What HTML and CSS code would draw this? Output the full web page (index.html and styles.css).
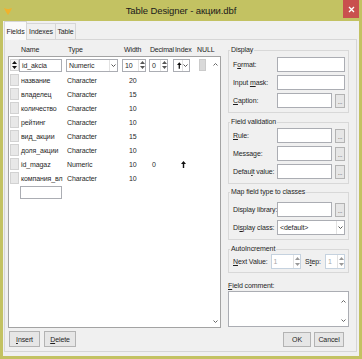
FILE: index.html
```html
<!DOCTYPE html>
<html lang="ru">

<head>
    <meta charset="UTF-8">
    <title>Table Designer - акции.dbf</title>
    <link rel="stylesheet" href="styles.css">
</head>

<body>

    <div class="window">
        <div class="titlebar">
            <svg class="app-icon" width="8" height="8" viewBox="0 0 8 8">
                <path d="M0 1 L3 2 L5 2 L8 1 L6 5 L4 8 L2 5 Z" fill="#f1b22c"/>
            </svg>
            <div class="title">Table Designer - акции.dbf</div>
            <div class="close">
                <svg width="7" height="7" viewBox="0 0 7 7"><path d="M1 1 L6 6 M6 1 L1 6" stroke="#fff" stroke-width="1.3"/></svg>
            </div>
        </div>

        <div class="client">
            <div class="tabs">
                <div class="tab active t-fields">Fields</div>
                <div class="tab t-indexes">Indexes</div>
                <div class="tab t-table">Table</div>
            </div>

            <div class="page">
                <!-- fields grid -->
                <div class="left">
                    <div class="grid-head">
                        <span></span>
                        <span>Name</span>
                        <span>Type</span>
                        <span>Width</span>
                        <span class="h-dec">Decimal</span>
                        <span>Index</span>
                        <span class="h-null">NULL</span>
                    </div>

                    <div class="grid">
                        <div class="rows">
                            <div class="row first">
                                <div class="sel">
                                    <svg width="5" height="8" viewBox="0 0 5 8"><path d="M2.5 0 L5 3 L0 3 Z M2.5 8 L5 5 L0 5 Z" fill="#111"/></svg>
                                </div>
                                <div class="c-name"><div class="edit name-edit">id_akcia</div></div>
                                <div class="c-type">
                                    <div class="edit combo type-combo">
                                        <span>Numeric</span>
                                        <span class="drop"><svg width="5" height="3" viewBox="0 0 5 3"><path d="M0.5 0.5 L2.5 2.5 L4.5 0.5" fill="none" stroke="#555"/></svg></span>
                                    </div>
                                </div>
                                <div class="c-width">
                                    <div class="edit spin w-spin">
                                        <span>10</span>
                                        <span class="arrows">
                                            <svg width="5" height="3" viewBox="0 0 5 3"><path d="M0 3 L2.5 0 L5 3 Z" fill="#555"/></svg>
                                            <svg width="5" height="3" viewBox="0 0 5 3"><path d="M0 0 L5 0 L2.5 3 Z" fill="#555"/></svg>
                                        </span>
                                    </div>
                                </div>
                                <div class="c-dec">
                                    <div class="edit spin d-spin">
                                        <span>0</span>
                                        <span class="arrows">
                                            <svg width="5" height="3" viewBox="0 0 5 3"><path d="M0 3 L2.5 0 L5 3 Z" fill="#555"/></svg>
                                            <svg width="5" height="3" viewBox="0 0 5 3"><path d="M0 0 L5 0 L2.5 3 Z" fill="#555"/></svg>
                                        </span>
                                    </div>
                                </div>
                                <div class="c-index">
                                    <div class="edit combo idx-combo">
                                        <svg class="up-arrow" width="5" height="7" viewBox="0 0 5 7"><path d="M2.5 0 L5 3 L3.2 3 L3.2 7 L1.8 7 L1.8 3 L0 3 Z" fill="#111"/></svg>
                                        <span class="drop"><svg width="5" height="3" viewBox="0 0 5 3"><path d="M0.5 0.5 L2.5 2.5 L4.5 0.5" fill="none" stroke="#555"/></svg></span>
                                    </div>
                                </div>
                                <div class="c-null"><div class="null-box"></div></div>
                            </div>

                            <div class="row"><div class="sel"></div><div class="c-name">название</div><div class="c-type">Character</div><div class="c-width">20</div><div></div><div></div><div></div></div>
                            <div class="row"><div class="sel"></div><div class="c-name">владелец</div><div class="c-type">Character</div><div class="c-width">15</div><div></div><div></div><div></div></div>
                            <div class="row"><div class="sel"></div><div class="c-name">количество</div><div class="c-type">Character</div><div class="c-width">10</div><div></div><div></div><div></div></div>
                            <div class="row"><div class="sel"></div><div class="c-name">рейтинг</div><div class="c-type">Character</div><div class="c-width">10</div><div></div><div></div><div></div></div>
                            <div class="row"><div class="sel"></div><div class="c-name">вид_акции</div><div class="c-type">Character</div><div class="c-width">15</div><div></div><div></div><div></div></div>
                            <div class="row"><div class="sel"></div><div class="c-name">доля_акции</div><div class="c-type">Character</div><div class="c-width">10</div><div></div><div></div><div></div></div>
                            <div class="row">
                                <div class="sel"></div><div class="c-name">id_magaz</div><div class="c-type">Numeric</div><div class="c-width">10</div><div class="c-dec">0</div>
                                <div class="c-index"><svg class="up-arrow" width="5" height="7" viewBox="0 0 5 7"><path d="M2.5 0 L5 3 L3.2 3 L3.2 7 L1.8 7 L1.8 3 L0 3 Z" fill="#111"/></svg></div>
                                <div></div>
                            </div>
                            <div class="row"><div class="sel"></div><div class="c-name">компания_вл</div><div class="c-type">Character</div><div class="c-width">10</div><div></div><div></div><div></div></div>
                            <div class="row new-row"><div></div><div class="c-name"><div class="edit new-edit"></div></div></div>
                        </div>

                        <div class="vscroll">
                            <svg width="5" height="3" viewBox="0 0 5 3"><path d="M0.5 2.5 L2.5 0.5 L4.5 2.5" fill="none" stroke="#666"/></svg>
                            <svg width="5" height="3" viewBox="0 0 5 3"><path d="M0.5 0.5 L2.5 2.5 L4.5 0.5" fill="none" stroke="#666"/></svg>
                        </div>
                    </div>

                    <div class="left-buttons">
                        <button class="btn b-insert"><u>I</u>nsert</button>
                        <button class="btn b-delete"><u>D</u>elete</button>
                    </div>
                </div>

                <!-- field properties -->
                <div class="right">
                    <fieldset class="group g-display">
                        <legend>Display</legend>
                        <div class="frow"><span>F<u>o</u>rmat:</span><div class="edit wide"></div></div>
                        <div class="frow"><span>Input <u>m</u>ask:</span><div class="edit wide"></div></div>
                        <div class="frow"><span><u>C</u>aption:</span><div class="edit"></div><div class="dots">...</div></div>
                    </fieldset>

                    <fieldset class="group g-valid">
                        <legend>Field validation</legend>
                        <div class="frow"><span><u>R</u>ule:</span><div class="edit"></div><div class="dots">...</div></div>
                        <div class="frow"><span>Message:</span><div class="edit"></div><div class="dots">...</div></div>
                        <div class="frow"><span>Defau<u>l</u>t value:</span><div class="edit"></div><div class="dots">...</div></div>
                    </fieldset>

                    <fieldset class="group g-map">
                        <legend>Map field type to classes</legend>
                        <div class="frow"><span>Display library:</span><div class="edit"></div><div class="dots">...</div></div>
                        <div class="frow">
                            <span>Di<u>s</u>play class:</span>
                            <div class="edit combo wide">
                                <span>&lt;default&gt;</span>
                                <span class="drop"><svg width="5" height="3" viewBox="0 0 5 3"><path d="M0.5 0.5 L2.5 2.5 L4.5 0.5" fill="none" stroke="#555"/></svg></span>
                            </div>
                        </div>
                    </fieldset>

                    <fieldset class="group g-auto">
                        <legend>AutoIncrement</legend>
                        <div class="auto-row">
                            <span><u>N</u>ext Value:</span>
                            <div class="edit spin off next-spin">
                                <span>1</span>
                                <span class="arrows">
                                    <svg width="5" height="3" viewBox="0 0 5 3"><path d="M0 3 L2.5 0 L5 3 Z" fill="#999"/></svg>
                                    <svg width="5" height="3" viewBox="0 0 5 3"><path d="M0 0 L5 0 L2.5 3 Z" fill="#999"/></svg>
                                </span>
                            </div>
                            <span class="step-label">S<u>t</u>ep:</span>
                            <div class="edit spin off step-spin">
                                <span>1</span>
                                <span class="arrows">
                                    <svg width="5" height="3" viewBox="0 0 5 3"><path d="M0 3 L2.5 0 L5 3 Z" fill="#999"/></svg>
                                    <svg width="5" height="3" viewBox="0 0 5 3"><path d="M0 0 L5 0 L2.5 3 Z" fill="#999"/></svg>
                                </span>
                            </div>
                        </div>
                    </fieldset>

                    <div class="comment-label"><u>F</u>ield comment:</div>
                    <div class="comment">
                        <div class="vscroll">
                            <svg width="5" height="3" viewBox="0 0 5 3"><path d="M0.5 2.5 L2.5 0.5 L4.5 2.5" fill="none" stroke="#666"/></svg>
                            <svg width="5" height="3" viewBox="0 0 5 3"><path d="M0.5 0.5 L2.5 2.5 L4.5 0.5" fill="none" stroke="#666"/></svg>
                        </div>
                    </div>

                    <div class="right-buttons">
                        <button class="btn b-ok">OK</button>
                        <button class="btn b-cancel">Cancel</button>
                    </div>
                </div>
            </div>
        </div>
    </div>

</body>

</html>
```

FILE: styles.css
```css
* {
    box-sizing: border-box;
}

body {
    margin: 0;
    font-family: "Liberation Sans", Arial, sans-serif;
    font-size: 7px;
    letter-spacing: -0.1px;
    color: #1f1f1f;
    background: #fff;
}

.window {
    width: 362px;
    height: 359px;
    display: flex;
    flex-direction: column;
    background: #c3c262;
    padding: 0 3px 4px 3px;
}

/* title bar */
.titlebar {
    height: 21px;
    flex: none;
    display: grid;
    grid-template-columns: 22px 1fr 22px;
    align-items: center;
}

.app-icon {
    margin-left: 1px;
}

.title {
    text-align: center;
    font-size: 9.5px;
    letter-spacing: -0.1px;
    color: #1a1a1a;
}

.close {
    justify-self: end;
    align-self: start;
    width: 16px;
    height: 18px;
    background: #c9504e;
    display: flex;
    align-items: center;
    justify-content: center;
}

/* dialog body */
.client {
    flex: 1;
    background: #f0f0f0;
    padding: 2px 2px 4px 1px;
    display: flex;
    flex-direction: column;
}

.tabs {
    display: flex;
    height: 16px;
    flex: none;
}

.tab {
    border: 1px solid #d6d6d6;
    border-bottom: none;
    line-height: 15px;
    text-align: center;
    background: #f0f0f0;
    margin-right: -1px;
}

.tab.active {
    background: #fafafa;
    height: 19px;
    margin-top: -2px;
    line-height: 19px;
    position: relative;
    z-index: 1;
}

.t-fields { width: 23px; }
.t-indexes { width: 30px; }
.t-table { width: 21px; }

.page {
    flex: 1;
    border: 1px solid #d6d6d6;
    background: #f0f0f0;
    padding: 4px 7px 4px 3px;
    display: flex;
    gap: 7px;
}

/* fields grid */
.left {
    width: 213px;
    display: flex;
    flex-direction: column;
}

.grid-head,
.row {
    display: grid;
    grid-template-columns: 11px 47px 56px 27px 24px 24px 1fr;
}

.grid-head {
    height: 12px;
    line-height: 12px;
    flex: none;
    white-space: nowrap;
}

.grid-head span {
    padding-left: 2px;
}

.grid-head .h-dec {
    padding-left: 1px;
    letter-spacing: -0.2px;
}

.grid-head .h-null {
    margin-left: -2px;
}

.grid {
    flex: 1;
    border: 1px solid #a3a3a3;
    background: #fff;
    display: flex;
}

.rows {
    flex: 1;
}

.row {
    grid-template-columns: 10px 47px 56px 27px 24px 24px 1fr;
    height: 14px;
    align-items: center;
}

.row.first {
    height: 16px;
}

.sel {
    width: 9px;
    height: 12px;
    margin-left: 1px;
    background: #e8e8e8;
    border: 1px solid #d2d2d2;
    display: flex;
    align-items: center;
    justify-content: center;
}

.row.first .sel {
    background: #f4f4f4;
}

.c-name {
    padding-left: 2px;
    line-height: 11px;
    white-space: nowrap;
    overflow: hidden;
}

.c-type {
    padding-left: 1px;
}

.c-width {
    padding-left: 7px;
}

.c-dec {
    padding-left: 3px;
}

.c-index {
    padding-left: 8px;
    display: flex;
}

.row.first .c-name,
.row.first .c-type,
.row.first .c-width,
.row.first .c-dec,
.row.first .c-index,
.new-row .c-name {
    padding-left: 0;
}

.edit {
    height: 13px;
    border: 1px solid #abadb3;
    background: #fff;
    display: flex;
    align-items: center;
    padding-left: 2px;
}

.name-edit { width: 43px; }
.type-combo { width: 52px; }
.w-spin { width: 24px; }
.d-spin { width: 19px; }
.idx-combo { width: 17px; padding-left: 3px; }
.new-edit { width: 42px; margin-left: 1px; }

.new-row {
    height: 15px;
}

.combo,
.spin {
    justify-content: space-between;
    padding-right: 0;
}

.drop {
    width: 8px;
    height: 100%;
    border-left: 1px solid #e2e2e2;
    display: flex;
    align-items: center;
    justify-content: center;
}

.arrows {
    width: 7px;
    height: 100%;
    border-left: 1px solid #e2e2e2;
    display: flex;
    flex-direction: column;
    align-items: center;
    justify-content: space-around;
    padding: 1px 0;
}

.arrows svg {
    display: block;
}

.null-box {
    width: 7px;
    height: 12px;
    margin-left: 2px;
    background: #d9d9d9;
    border: 1px solid #cbcbcb;
}

.vscroll {
    width: 9px;
    display: flex;
    flex-direction: column;
    justify-content: space-between;
    align-items: center;
    padding: 6px 0 4px;
}

.left-buttons {
    margin-top: 3px;
    display: flex;
    gap: 4px;
    padding-left: 1px;
}

.btn {
    height: 16px;
    padding: 0;
    font-family: inherit;
    font-size: 7px;
    letter-spacing: -0.1px;
    color: #1f1f1f;
    background: #e6e6e6;
    border: 1px solid #b3b3b3;
}

.b-insert { width: 31px; }
.b-delete { width: 32px; }

/* field properties */
.right {
    width: 121px;
    padding-top: 1px;
    display: flex;
    flex-direction: column;
}

.group {
    margin: 0;
    min-width: 0;
    border: 1px solid #d8d8d8;
    padding: 2px 3px 4px 2px;
    display: flex;
    flex-direction: column;
    gap: 3px;
}

.group legend {
    padding: 0 1px;
    margin-left: -1px;
    line-height: 10px;
}

.g-valid {
    margin-top: 4px;
    padding-top: 1px;
}

.g-map {
    margin-top: 3px;
    padding-top: 5px;
}

.g-auto {
    margin-top: 4px;
    padding-top: 0;
    padding-bottom: 3px;
}

.frow {
    height: 15px;
    padding-left: 2px;
    display: grid;
    grid-template-columns: 41px 1fr 10px;
    column-gap: 3px;
    align-items: center;
    white-space: nowrap;
}

.frow .edit {
    height: 15px;
}

.frow .wide {
    grid-column: 2 / 4;
}

.dots {
    height: 14px;
    border: 1px solid #b3b3b3;
    background: #e6e6e6;
    font-size: 6px;
    line-height: 14px;
    text-align: center;
}

.auto-row {
    height: 15px;
    padding-left: 2px;
    display: flex;
    align-items: center;
    white-space: nowrap;
}

.spin.off {
    height: 15px;
    border-color: #c5d2df;
    color: #a8a8a8;
}

.next-spin {
    width: 32px;
    margin-left: 3px;
}

.step-label {
    margin-left: 4px;
}

.step-spin {
    width: 21px;
    margin-left: 4px;
}

.comment-label {
    margin-top: 8px;
    line-height: 10px;
}

.comment {
    height: 36px;
    border: 1px solid #abadb3;
    background: #fff;
    display: flex;
    justify-content: flex-end;
}

.comment .vscroll {
    padding: 8px 0 4px;
}

.right-buttons {
    margin-top: 5px;
    padding-right: 5px;
    display: flex;
    justify-content: flex-end;
    gap: 3px;
}

.b-ok { width: 28px; height: 15px; }
.b-cancel { width: 30px; height: 15px; }
```
